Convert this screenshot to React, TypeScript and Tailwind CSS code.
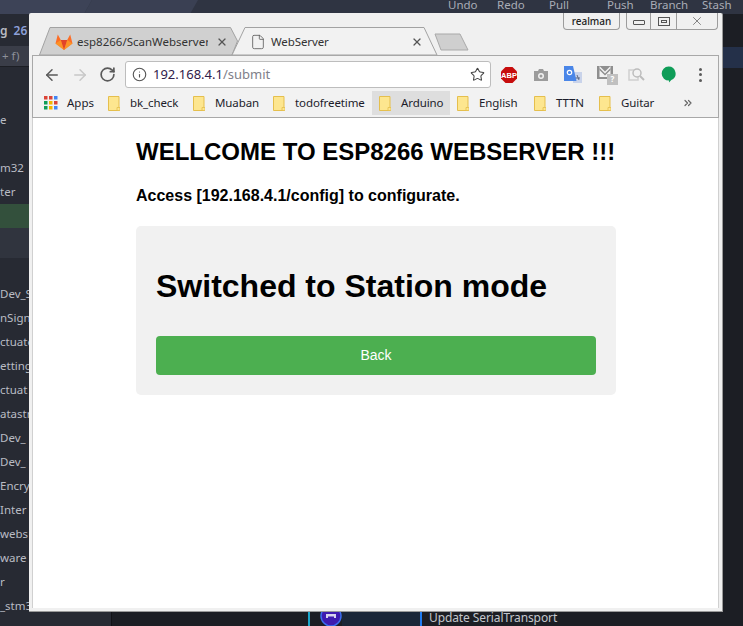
import { ArrowLeft, ArrowRight, RotateCw, Info, Star, X, File, ChevronsRight } from "lucide-react";

const sideFont = { fontFamily: '"Noto Sans", "Open Sans", sans-serif' };

function Folder() {
  return (
    <svg width="12" height="15" viewBox="0 0 12 15" className="shrink-0">
      <path d="M.5.5h10.5v14H.5z" fill="#fde68f" stroke="#e5bf4d" />
      <path d="M9 11.5h3v3H9z" fill="#fde68f" stroke="#e5bf4d" strokeWidth=".8" />
    </svg>
  );
}

function Bookmark({ label, active, w }: { label: string; active?: boolean; w: string }) {
  return (
    <div className={`flex h-[24px] items-center ${w} ${active ? "bg-[#dedede]" : ""}`}>
      <span className="ml-[7px]"><Folder /></span>
      <span className="ml-[10px] whitespace-nowrap text-[11.5px] tracking-[-0.1px] text-[#1c1c2a]">{label}</span>
    </div>
  );
}

function SideRow({ t }: { t: string }) {
  return <div className="h-[24px] whitespace-nowrap text-[11.5px] leading-[24px] text-[#b9bcc4]">{t}</div>;
}

export default function App() {
  return (
    <div className="relative flex h-[626px] w-[743px] flex-col overflow-hidden bg-[#1c1e24]" style={sideFont}>
      <div className="relative flex h-[14px] shrink-0 items-start bg-[#2f3442] text-[11.5px] leading-[9px] text-[#a9acb6]">
        <svg width="300" height="14" className="absolute left-0 top-0">
          <path d="M0 0H92L84 14H0Z" fill="#3d4357" />
          <path d="M92 0H198L190 14H84Z" fill="#3a4053" />
        </svg>
        <div className="relative ml-[448px] w-[49px]">Undo</div>
        <div className="relative w-[52px]">Redo</div>
        <div className="relative w-[58px]">Pull</div>
        <div className="relative w-[43px]">Push</div>
        <div className="relative w-[52px]">Branch</div>
        <div className="relative">Stash</div>
      </div>

      <div className="flex min-h-0 flex-1">
        <div className="w-[112px] shrink-0 overflow-hidden border-r border-[#121317] bg-[#272a33]">
          <div className="flex h-[27px] items-end whitespace-nowrap text-[12px] font-semibold leading-[20px] text-[#b9bcc4]">
            <span>g</span><span className="ml-[6px] text-[#8ea0d8]">26</span>
          </div>
          <div className="mt-[5px] flex h-[20px] items-center bg-[#3a3d48] pl-[2px] text-[11.5px] text-[#8d909a]">+ f)</div>
          <div className="h-px bg-[#1c1e24]" />
          <div className="h-[41px]" />
          <SideRow t="e" />
          <div className="h-[24px]" />
          <SideRow t="m32" />
          <SideRow t="ter" />
          <div className="h-[24px] bg-[#33503c]" />
          <div className="h-[30px] bg-[#30343e]" />
          <div className="h-[24px]" />
          <SideRow t="Dev_S" />
          <SideRow t="nSign" />
          <SideRow t="ctuato" />
          <SideRow t="etting" />
          <SideRow t="ctuat" />
          <SideRow t="atastr" />
          <SideRow t="Dev_" />
          <SideRow t="Dev_" />
          <SideRow t="Encry" />
          <SideRow t="Inter" />
          <SideRow t="webs" />
          <SideRow t="ware" />
          <SideRow t="r" />
          <SideRow t="_stm3" />
        </div>
        <div className="flex min-w-0 flex-1 flex-col">
          <div className="h-[33px]" />
          <div className="h-[21px] bg-[#243049]" />
          <div className="flex-1" />
          <div className="flex h-[14px]">
            <div className="ml-[196px] h-full w-[2px] bg-[#1aa5c9]" />
            <svg width="22" height="14" viewBox="0 0 22 14" className="ml-[10px]">
              <circle cx="11" cy="4" r="10" fill="#3e1bb0" stroke="#3b6df0" strokeWidth="1.5" />
              <path d="M6 2h10v4H14V4.500H8V6H6z" fill="#d8d4ee" />
            </svg>
            <div className="h-full w-[78px] bg-[#1a2638]" />
            <div className="h-full w-[2px] bg-[#1f7bf0]" />
            <div className="ml-[7px] text-[12px] leading-[12px] tracking-[-0.1px] text-[#c3c6cc]">Update SerialTransport</div>
          </div>
        </div>
      </div>

      {/* browser window floating over the desktop */}
      <div className="absolute left-[29px] top-[13px] flex h-[599px] w-[694px] flex-col rounded-t-[2px] border-r border-b border-[#9a9a9a] bg-[#f0f0f0] pl-[3px] pr-[3px] pb-[3px]">
        <div className="relative h-[42px] shrink-0">
          <svg width="694" height="42" className="absolute left-[-3px] top-0">
            <path d="M10.500 42 21 14.500H201.500L208.500 28 203 42Z" fill="#d0d0d0" stroke="#a2a2a2" />
            <path d="M203 42 216 14.500H395L408 42Z" fill="#f2f2f2" stroke="#a2a2a2" />
            <path d="M406 21H431L439 37H412Z" fill="#cfcfcf" stroke="#a9a9a9" strokeLinejoin="round" />
          </svg>
          <div className="absolute left-[23px] top-[20px] flex h-[18px] items-center">
            <svg width="18" height="16" viewBox="0 0 18 16">
              <path d="M9 16 .500 9.500 2.800.500 5.800 6H12.200L15.200.500 17.500 9.500Z" fill="#fc6d26" />
              <path d="M9 16 5.800 6H12.200Z" fill="#e24329" />
              <path d="M.500 9.500 9 16 5.800 6Z" fill="#fca326" opacity=".7" />
              <path d="M17.500 9.500 9 16 12.200 6Z" fill="#fca326" opacity=".7" />
            </svg>
            <span className="ml-[4px] w-[131px] overflow-hidden whitespace-nowrap text-[11.5px] text-[#333]">esp8266/ScanWebserver/</span>
            <X size={12} strokeWidth={2.4} className="ml-[8px] text-[#555]" />
          </div>
          <div className="absolute left-[218px] top-[20px] flex h-[18px] items-center">
            <File size={16} strokeWidth={1.2} className="text-[#555]" />
            <span className="ml-[5px] w-[140px] text-[11.5px] tracking-[-0.1px] text-[#333]">WebServer</span>
            <X size={12} strokeWidth={2.4} className="text-[#555]" />
          </div>
          <div className="absolute right-[1px] top-0 flex items-start">
            <div className="flex h-[17px] w-[57px] items-center justify-center rounded-b-[4px] border border-t-0 border-[#9c9c9c] text-[10px] font-medium text-[#222]">realman</div>
            <div className="ml-[6px] flex h-[17px] w-[92px] rounded-b-[4px] border border-t-0 border-[#9c9c9c]">
              <div className="flex w-[24px] items-center justify-center border-r border-[#9c9c9c]"><div className="mt-[3px] h-[5px] w-[12px] rounded-[1px] border border-[#555]" /></div>
              <div className="flex w-[26px] items-center justify-center border-r border-[#9c9c9c]"><div className="flex h-[9px] w-[12px] items-center justify-center border border-[#555]"><div className="h-[3px] w-[6px] border border-[#555]" /></div></div>
              <div className="flex flex-1 items-center justify-center"><X size={14} strokeWidth={1.2} className="text-[#555]" /></div>
            </div>
          </div>
        </div>

        <div className="flex h-[34px] shrink-0 items-center border-t border-l border-r border-[#a8a8a8] bg-[#f2f2f2] pt-[4px]">
          <ArrowLeft size={18} strokeWidth={2} className="ml-[10px] text-[#5a5a5a]" />
          <ArrowRight size={18} strokeWidth={2} className="ml-[10px] text-[#c8c8c8]" />
          <RotateCw size={17} strokeWidth={2.4} className="ml-[10px] text-[#5a5a5a]" />
          <div className="ml-[9px] flex h-[27px] w-[366px] items-center rounded-[3px] border border-[#bdbdbd] bg-white">
            <Info size={15} strokeWidth={1.8} className="ml-[6px] text-[#555]" />
            <span className="ml-[6px] text-[13px] text-[#30204a]">192.168.4.1<span className="text-[#80808a]">/submit</span></span>
            <Star size={15} strokeWidth={1.7} className="ml-auto mr-[5px] text-[#444]" />
          </div>
          <svg width="18" height="18" viewBox="0 0 18 18" className="ml-[9px]">
            <path d="M5.500 1h7L17 5.500v7L12.500 17h-7L1 12.500v-7Z" fill="#c70d0d" />
            <text x="9" y="12" textAnchor="middle" fontSize="7.500" fontWeight="700" fill="#fff" fontFamily="Liberation Sans">ABP</text>
          </svg>
          <svg width="16" height="14" viewBox="0 0 16 14" className="ml-[15px]">
            <path d="M1 3h4l1-2h4l1 2h4v10H1Z" fill="#9c9c9c" />
            <circle cx="8" cy="8" r="3" fill="#f2f2f2" />
            <circle cx="8" cy="8" r="1.500" fill="#9c9c9c" />
          </svg>
          <svg width="18" height="17" viewBox="0 0 18 17" className="ml-[15px]">
            <path d="M9 6h9v11H9z" fill="#c9d3ea" />
            <path d="M13 9l2 5M11 12h5" stroke="#5f6b85" strokeWidth="1" fill="none" />
            <path d="M0 0H9l3.500 15H0Z" fill="#4a86e8" />
            <circle cx="5.500" cy="6.500" r="2.200" fill="none" stroke="#fff" strokeWidth="1.200" />
          </svg>
          <div className="relative ml-[14px] h-[20px] w-[22px]">
            <svg width="18" height="14" viewBox="0 0 18 14" className="absolute left-0 top-0">
              <path d="M1 1h16v13H1Z" fill="#8f8f8f" />
              <path d="M3.500 1 9 6.500 14.500 1V12H3.500Z" fill="#f2f2f2" />
              <path d="M3.500 3 9 8.500 14.500 3V5L9 10.500 3.500 5Z" fill="#8f8f8f" />
            </svg>
            <div className="absolute bottom-0 right-0 flex h-[11px] w-[11px] items-center justify-center bg-[#c0c0c0] text-[8px] font-bold text-white">?</div>
          </div>
          <svg width="17" height="16" viewBox="0 0 17 16" className="ml-[10px]">
            <rect x="1" y="3" width="9" height="10" fill="none" stroke="#cfcfcf" strokeWidth="1.500" />
            <circle cx="9" cy="6" r="4" fill="#f2f2f2" stroke="#bcbcbc" strokeWidth="1.500" />
            <path d="M12 9l4 4" stroke="#bcbcbc" strokeWidth="2" />
          </svg>
          <svg width="15" height="17" viewBox="0 0 16 17" className="ml-[16px]">
            <path d="M8 0a7.500 7.500 0 0 1 3 14.400L8.500 17V15A7.500 7.500 0 0 1 8 0Z" fill="#0f9d58" />
          </svg>
          <div className="ml-[23px] flex flex-col gap-[2.500px]">
            <div className="h-[3px] w-[3px] rounded-full bg-[#5a5a5a]" />
            <div className="h-[3px] w-[3px] rounded-full bg-[#5a5a5a]" />
            <div className="h-[3px] w-[3px] rounded-full bg-[#5a5a5a]" />
          </div>
        </div>

        <div className="flex h-[29px] shrink-0 items-center border-x border-b border-[#a8a8a8] bg-[#f2f2f2]">
          <svg width="14" height="14" viewBox="0 0 14 14" className="ml-[11px]">
            {[["#db4437", 0, 0], ["#db4437", 5, 0], ["#4285f4", 10, 0], ["#0f9d58", 0, 5], ["#f4b400", 5, 5], ["#db4437", 10, 5], ["#0f9d58", 0, 10], ["#f4b400", 5, 10], ["#4285f4", 10, 10]].map(([c, x, y], i) => (
              <rect key={i} x={x as number} y={y as number} width="3.500" height="3.500" fill={c as string} />
            ))}
          </svg>
          <span className="ml-[9px] w-[34px] text-[11.5px] text-[#1c1c2a]">Apps</span>
          <Bookmark label="bk_check" w="w-[85px]" />
          <Bookmark label="Muaban" w="w-[80px]" />
          <Bookmark label="todofreetime" w="w-[106px]" />
          <Bookmark label="Arduino" active w="w-[78px]" />
          <Bookmark label="English" w="w-[77px]" />
          <Bookmark label="TTTN" w="w-[65px]" />
          <Bookmark label="Guitar" w="w-[90px]" />
          <ChevronsRight size={12} strokeWidth={2.4} className="text-[#666]" />
        </div>

        <main className="min-h-0 flex-1 border-x border-[#d0d0d0] bg-white" style={{ fontFamily: '"Liberation Sans", Arial, sans-serif' }}>
          <div className="ml-[103px] w-[480px] text-black">
            <h2 className="mt-[20px] whitespace-nowrap text-[24px] font-bold leading-[28px]">WELLCOME TO ESP8266 WEBSERVER !!!</h2>
            <h4 className="mt-[21px] text-[16px] font-bold leading-[18px]">Access [192.168.4.1/config] to configurate.</h4>
            <div className="mt-[21px] rounded-[5px] bg-[#f1f1f1] p-[20px]">
              <h1 className="mt-[22px] text-[32px] font-bold leading-[37px]">Switched to Station mode</h1>
              <button className="mt-[31px] block h-[39px] w-full rounded-[4px] bg-[#4caf50] text-[14px] text-white">Back</button>
            </div>
          </div>
        </main>
      </div>
    </div>
  );
}
